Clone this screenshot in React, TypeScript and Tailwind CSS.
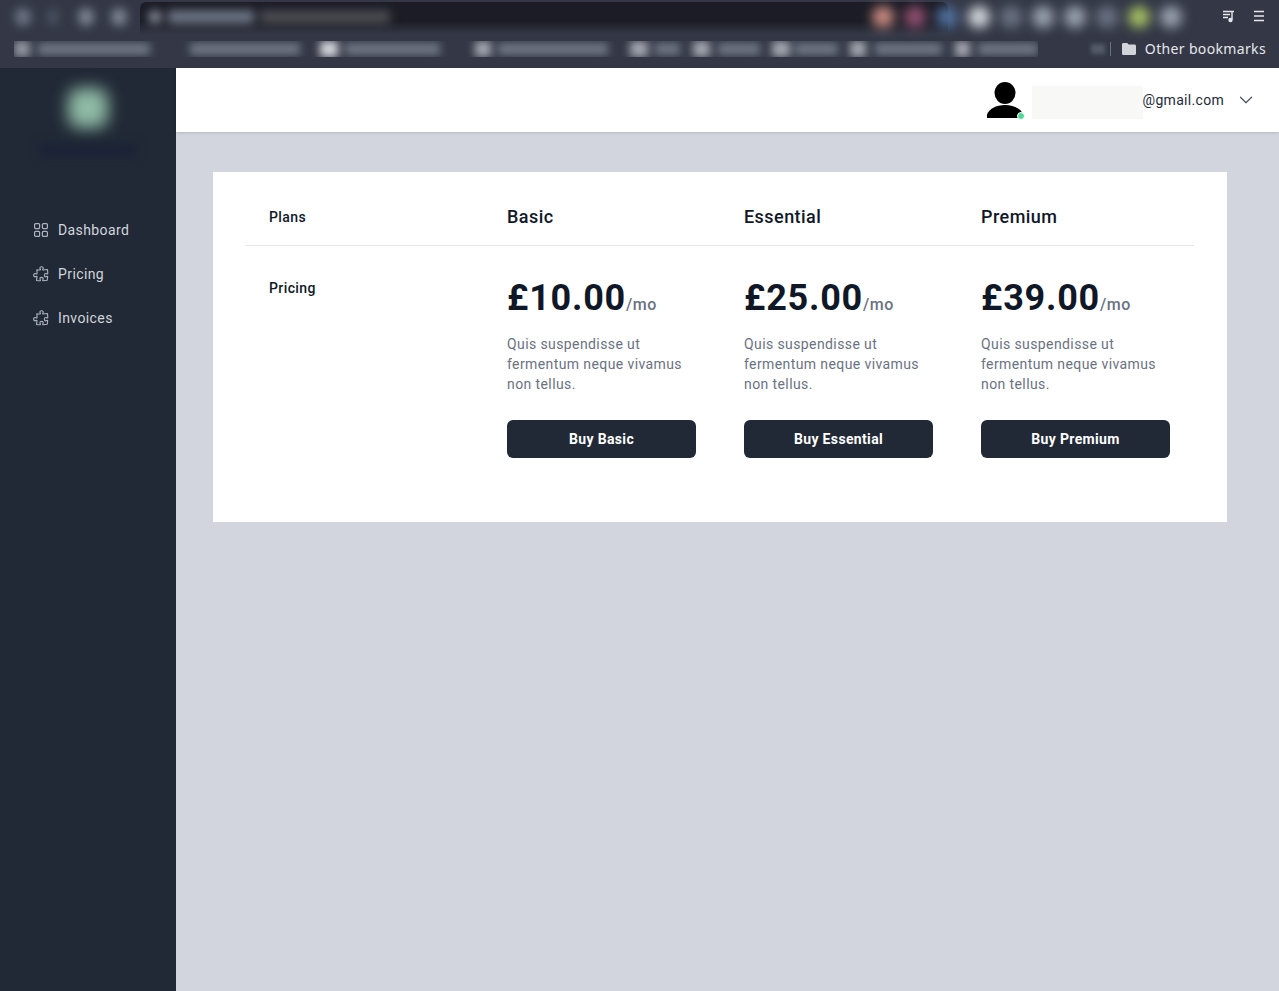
import React from 'react';
import { ChevronDown } from 'lucide-react';

const plans = [
  { name: 'Basic', price: '£10.00' },
  { name: 'Essential', price: '£25.00' },
  { name: 'Premium', price: '£39.00' },
];

const bookmarks = [
  { w: 'w-[112px]', icon: 'w-[16px] mr-[8px] bg-gray-300/60', mr: 'mr-[40px]' },
  { w: 'w-[110px]', icon: 'w-0 mr-0', mr: 'mr-[20px]' },
  { w: 'w-[95px]', icon: 'w-[18px] mr-[7px] bg-gray-200/90', mr: 'mr-[35px]' },
  { w: 'w-[110px]', icon: 'w-[16px] mr-[7px] bg-gray-300/70', mr: 'mr-[22px]' },
  { w: 'w-[25px]', icon: 'w-[18px] mr-[7px] bg-gray-300/70', mr: 'mr-[13px]' },
  { w: 'w-[42px]', icon: 'w-[17px] mr-[8px] bg-gray-300/70', mr: 'mr-[12px]' },
  { w: 'w-[43px]', icon: 'w-[18px] mr-[5px] bg-gray-300/70', mr: 'mr-[12px]' },
  { w: 'w-[67px]', icon: 'w-[16px] mr-[9px] bg-gray-300/70', mr: 'mr-[13px]' },
  { w: 'w-[60px]', icon: 'w-[15px] mr-[8px] bg-gray-300/70', mr: 'mr-0' },
];

const toolbarDots = [
  'bg-[#c98a80]', 'bg-[#8f4f70]', 'bg-[#4f6f9c]', 'bg-gray-300', 'bg-gray-500', 'bg-gray-400',
  'bg-gray-400', 'bg-gray-500', 'bg-[#a3bd63]', 'bg-gray-400',
];

const PuzzleIcon = () => (
  <svg width="18" height="18" viewBox="0 0 24 24" fill="none" stroke="currentColor" strokeWidth="1.5" strokeLinecap="round" strokeLinejoin="round">
    <path d="M14.25 6.087c0-.355.186-.676.401-.959.221-.29.349-.634.349-1.003 0-1.036-1.007-1.875-2.25-1.875s-2.25.84-2.25 1.875c0 .369.128.713.349 1.003.215.283.401.604.401.959v0a.64.64 0 01-.657.643 48.39 48.39 0 01-4.163-.3c.186 1.613.293 3.25.315 4.907a.656.656 0 01-.658.663v0c-.355 0-.676-.186-.959-.401a1.647 1.647 0 00-1.003-.349c-1.036 0-1.875 1.007-1.875 2.25s.84 2.25 1.875 2.25c.369 0 .713-.128 1.003-.349.283-.215.604-.401.959-.401v0c.31 0 .555.26.532.57a48.039 48.039 0 01-.642 5.056c1.518.19 3.058.309 4.616.354a.64.64 0 00.657-.643v0c0-.355-.186-.676-.401-.959a1.647 1.647 0 01-.349-1.003c0-1.035 1.008-1.875 2.25-1.875 1.243 0 2.25.84 2.25 1.875 0 .369-.128.713-.349 1.003-.215.283-.4.604-.4.959v0c0 .333.277.599.61.58a48.1 48.1 0 005.427-.63 48.05 48.05 0 00.582-4.717.532.532 0 00-.533-.57v0c-.355 0-.676.186-.959.401-.29.221-.634.349-1.003.349-1.035 0-1.875-1.007-1.875-2.25s.84-2.25 1.875-2.25c.37 0 .713.128 1.003.349.283.215.604.401.96.401v0a.656.656 0 00.658-.663 48.422 48.422 0 00-.37-5.36c-1.886.342-3.81.574-5.766.689a.578.578 0 01-.61-.58v0z" />
  </svg>
);

const GridIcon = () => (
  <svg width="16" height="16" viewBox="0 0 16 16" fill="none" stroke="currentColor" strokeWidth="1.2">
    <rect x="1.6" y="1.6" width="5" height="5" rx="1" />
    <rect x="9.4" y="1.6" width="5" height="5" rx="1" />
    <rect x="1.6" y="9.4" width="5" height="5" rx="1" />
    <rect x="9.4" y="9.4" width="5" height="5" rx="1" />
  </svg>
);

const BrowserBar = () => (
  <div className="h-[68px] bg-[#343846] overflow-hidden flex flex-col shrink-0">
    <div className="h-[34px] flex items-start">
      <div className="flex items-center gap-[17px] pl-[15px] pt-[8px] w-[140px] shrink-0 blur-[5px]">
        <div className="w-[16px] h-[18px] rounded-full bg-gray-500" />
        <div className="w-[10px] h-[16px] rounded-full bg-gray-600 mr-[3px]" />
        <div className="w-[16px] h-[18px] rounded-full bg-gray-400/70" />
        <div className="w-[16px] h-[18px] rounded-full bg-gray-400/70" />
      </div>
      <div className="mt-[2px] w-[808px] h-[32px] rounded-t-md bg-gradient-to-b from-[#1b1c25] from-60% to-[#343846] flex items-start pt-[8px] pl-[8px] overflow-hidden shrink-0">
        <div className="flex items-center gap-[6px] blur-[5px]">
          <div className="w-[14px] h-[14px] rounded-full bg-gray-400/80" />
          <div className="w-[86px] h-[14px] bg-gray-500" />
          <div className="w-[130px] h-[14px] bg-[#4a4b50]" />
        </div>
      </div>
      <div className="-ml-[76px] flex items-center gap-[10px] pt-[6px] blur-[6px]">
        {toolbarDots.map((c, i) => (
          <div key={i} className={`w-[22px] h-[22px] rounded-full ${c}`} />
        ))}
      </div>
      <div className="ml-auto flex items-center gap-[18px] pr-[15px] pt-[9px]">
        <svg width="14" height="14" viewBox="0 0 14 14" fill="none" stroke="#e5e7eb" strokeWidth="1.4">
          <path d="M1 2.500h11M1 5.500h7M1 8.500h5" />
          <path d="M10 3v7.500" />
          <circle cx="8.500" cy="11" r="1.500" fill="#e5e7eb" />
        </svg>
        <svg width="10" height="12" viewBox="0 0 10 12" fill="none" stroke="#e5e7eb" strokeWidth="1.500">
          <path d="M0 1.500h10M0 6h10M0 10.500h10" />
        </svg>
      </div>
    </div>
    <div className="h-[34px] flex items-center pl-[14px] pr-[13px] pb-[5px]">
      <div className="flex items-center h-[16px] overflow-hidden">
        <div className="flex items-center blur-[4px]">
          {bookmarks.map((b, i) => (
            <div key={i} className={`flex items-center ${b.mr}`}>
              <div className={`h-[16px] ${b.icon}`} />
              <div className={`h-[12px] bg-gray-400/60 ${b.w}`} />
            </div>
          ))}
        </div>
      </div>
      <div className="ml-auto w-[14px] h-[10px] bg-gray-500/60 blur-[2px]" />
      <div className="ml-[5px] w-px h-[14px] bg-gray-500" />
      <svg className="ml-[11px]" width="14" height="12" viewBox="0 0 14 12" fill="#d1d5db">
        <path d="M0 1.500C0 .7.6 0 1.400 0h3.800l1.400 1.600h6C13.400 1.600 14 2.300 14 3v7.500c0 .8-.6 1.500-1.400 1.500H1.400C.6 12 0 11.300 0 10.500z" />
      </svg>
      <span className="ml-[9px] text-[14px] tracking-[0.35px] text-[#e5e7eb] font-['Noto_Sans','Open_Sans',sans-serif]">
        Other bookmarks
      </span>
    </div>
  </div>
);

const NavItem = ({ icon, label }: { icon: React.ReactNode; label: string }) => (
  <a className="flex items-center h-[44px] pl-[32px] text-gray-300 text-[14px] tracking-[0.4px]">
    <span className="w-[18px] h-[18px] mr-[8px] flex items-center justify-center text-[#aeb4bf]">{icon}</span>
    {label}
  </a>
);

const Sidebar = () => (
  <aside className="w-[176px] shrink-0 bg-[#212936] flex flex-col">
    <div className="h-[140px] flex flex-col items-center">
      <div className="mt-[20px] w-[40px] h-[40px] rounded-xl bg-[#8fbaa5] blur-[8px]" />
      <div className="mt-[16px] w-[96px] h-[12px] bg-[#1b2237] blur-[5px]" />
    </div>
    <nav className="flex flex-col">
      <NavItem icon={<GridIcon />} label="Dashboard" />
      <NavItem icon={<PuzzleIcon />} label="Pricing" />
      <NavItem icon={<PuzzleIcon />} label="Invoices" />
    </nav>
  </aside>
);

const TopBar = () => (
  <header className="h-[64px] bg-white shadow flex items-center justify-end shrink-0">
    <div className="relative w-[36px] h-[36px] mr-[9px]">
      <svg width="36" height="36" viewBox="0 0 36 36" fill="#000">
        <ellipse cx="18" cy="11" rx="10.500" ry="11" />
        <path d="M0 36v-3.500C2 27 9 23 18 23s16 4 18 9.500V36z" />
      </svg>
      <span className="absolute right-[-2px] bottom-[-2px] w-[8px] h-[8px] rounded-full bg-[#4fd49a] border border-white" />
    </div>
    <div className="w-[111px] h-[33px] mt-[5px] bg-[#f8f8f7] blur-[0.5px]" />
    <span className="text-[14px] tracking-[0.3px] text-gray-800">@gmail.com</span>
    <ChevronDown size={22} strokeWidth={1.3} className="ml-[11px] mr-[22px] text-gray-600" />
  </header>
);

const PricingCard = () => (
  <div className="mt-[40px] ml-[37px] w-[1014px] h-[350px] bg-white pl-[32px] pr-[33px]">
    <div className="grid grid-cols-[238px_237px_237px_237px] h-[74px] items-center border-b border-gray-200">
      <div className="px-[24px] pt-[18px] text-[14px] font-medium tracking-[0.4px] text-gray-900">Plans</div>
      {plans.map((p) => (
        <div key={p.name} className="px-[24px] pt-[16px] text-[18px] leading-[28px] font-medium tracking-[0.45px] text-gray-900">
          {p.name}
        </div>
      ))}
    </div>
    <div className="grid grid-cols-[238px_237px_237px_237px]">
      <div className="px-[24px] pt-[32px] text-[14px] leading-[20px] font-medium tracking-[0.4px] text-gray-900">Pricing</div>
      {plans.map((p) => (
        <div key={p.name} className="px-[24px] pt-[29px]">
          <p className="h-[46px] leading-[46px] whitespace-nowrap">
            <span className="text-[36px] font-bold tracking-[0.75px] text-gray-900">{p.price}</span>
            <span className="text-[16px] font-medium tracking-[0.6px] text-gray-500">/mo</span>
          </p>
          <p className="mt-[13px] text-[14px] leading-[20px] tracking-[0.4px] text-gray-500">
            Quis suspendisse ut fermentum neque vivamus non tellus.
          </p>
          <button className="mt-[26px] w-full h-[38px] rounded-md bg-[#212936] text-white text-[14px] font-bold tracking-[0.35px]">
            Buy {p.name}
          </button>
        </div>
      ))}
    </div>
  </div>
);

export default function App() {
  return (
    <div className="h-[991px] w-[1279px] overflow-hidden flex flex-col font-['Roboto',sans-serif]">
      <BrowserBar />
      <div className="flex flex-1 min-h-0">
        <Sidebar />
        <div className="flex-1 flex flex-col bg-[#d2d5de]">
          <TopBar />
          <PricingCard />
        </div>
      </div>
    </div>
  );
}
